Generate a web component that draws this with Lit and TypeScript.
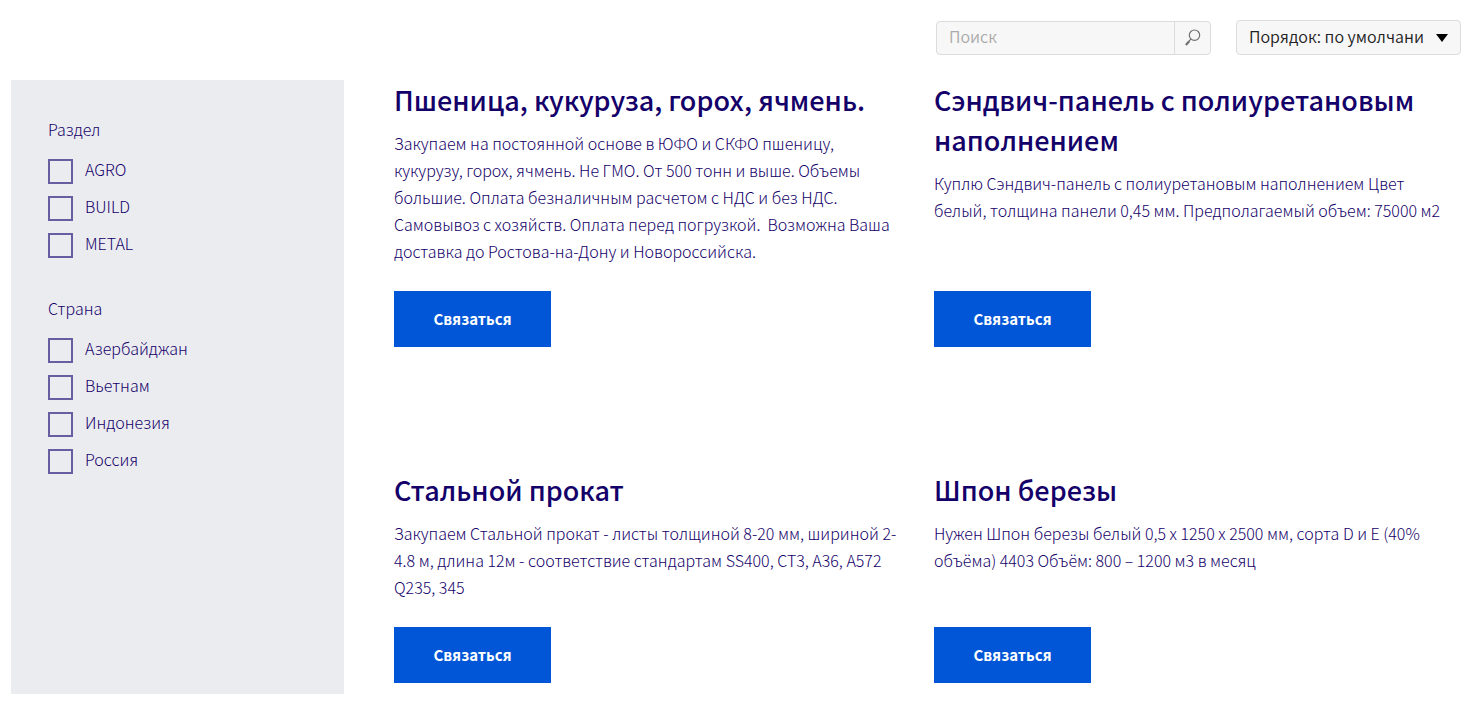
import { LitElement, html, css } from "lit";
import { customElement } from "lit/decorators.js";

interface Offer {
  title: string;
  text: string;
}

interface FilterGroup {
  name: string;
  key: string;
  options: string[];
}

const FILTERS: FilterGroup[] = [
  { name: "Раздел", key: "section", options: ["AGRO", "BUILD", "METAL"] },
  { name: "Страна", key: "country", options: ["Азербайджан", "Вьетнам", "Индонезия", "Россия"] },
];

const OFFERS: Offer[] = [
  {
    title: "Пшеница, кукуруза, горох, ячмень.",
    text: "Закупаем на постоянной основе в ЮФО и СКФО пшеницу, кукурузу, горох, ячмень. Не ГМО. От 500 тонн и выше. Объемы большие. Оплата безналичным расчетом с НДС и без НДС. Самовывоз с хозяйств. Оплата перед погрузкой.\u00a0 Возможна Ваша доставка до Ростова-на-Дону и Новороссийска.",
  },
  {
    title: "Сэндвич-панель с полиуретановым наполнением",
    text: "Куплю Сэндвич-панель с полиуретановым наполнением Цвет белый, толщина панели 0,45 мм. Предполагаемый объем: 75000 м2",
  },
  {
    title: "Стальной прокат",
    text: "Закупаем Стальной прокат - листы толщиной 8-20 мм, шириной 2-4.8 м, длина 12м - соответствие стандартам SS400, СТ3, А36, А572 Q235, 345",
  },
  {
    title: "Шпон березы",
    text: "Нужен Шпон березы белый 0,5 x 1250 x 2500 мм, сорта D и E (40% объёма) 4403 Объём: 800 – 1200 м3 в месяц",
  },
];

@customElement("app-root")
export class AppRoot extends LitElement {
  static styles = css`
    :host {
      display: block;
      box-sizing: border-box;
      padding: 20px 8px 12px 11px;
      background: #fff;
      color: #140069;
      font: 300 16px/27px "Noto Sans CJK SC", "Noto Sans", sans-serif;
    }
    *, *::before { box-sizing: border-box; }
    input, select, button { font: inherit; margin: 0; }
    .toolbar {
      display: flex;
      justify-content: flex-end;
      align-items: flex-end;
      gap: 25px;
      height: 35px;
      margin-bottom: 25px;
      font-weight: 350;
    }
    .search {
      display: flex;
      width: 275px;
      height: 34px;
      border: 1px solid #dcdcdc;
      border-radius: 4px;
      background: #f7f7f7;
      overflow: hidden;
    }
    .query {
      flex: 1;
      min-width: 0;
      padding: 0 12px 4px;
      border: 0;
      background: none;
      color: #222;
      outline-offset: -2px;
    }
    .query::placeholder { color: #aaa; opacity: 1; }
    .find {
      display: grid;
      place-items: center;
      width: 36px;
      padding: 0;
      border: 0;
      border-left: 1px solid #dcdcdc;
      background: none;
      cursor: pointer;
    }
    .sort { display: grid; align-items: center; width: 225px; }
    .sort > * { grid-area: 1 / 1; }
    .order {
      appearance: none;
      width: 100%;
      height: 35px;
      padding: 0 32px 2px 12px;
      border: 1px solid #dcdcdc;
      border-radius: 4px;
      background: #f7f7f7;
      color: #222;
    }
    .arrow { justify-self: end; margin-right: 13px; pointer-events: none; }
    .layout {
      display: grid;
      grid-template-columns: 333px 1fr;
      gap: 50px;
    }
    .filters {
      display: flex;
      flex-direction: column;
      gap: 37px;
      padding: 36px 37px;
      background: #ebecf0;
    }
    .group { margin: 0; padding: 0; border: 0; min-width: 0; }
    .legend { padding: 0; margin-bottom: 16px; }
    .options { display: flex; flex-direction: column; gap: 12px; }
    .option {
      display: flex;
      align-items: flex-start;
      gap: 12px;
      line-height: 20px;
      cursor: pointer;
    }
    .box {
      appearance: none;
      flex: none;
      width: 25px;
      height: 25px;
      border: 2px solid #675da0;
    }
    .box:checked { background: #675da0; }
    .offers {
      display: grid;
      grid-template-columns: 1fr 1fr;
      gap: 123px 25px;
      align-content: start;
      padding: 0 12px 11px 0;
    }
    .card { display: flex; flex-direction: column; align-items: flex-start; }
    .title { margin: 0 0 10px; font-size: 27px; font-weight: 500; line-height: 40px; }
    .text { margin: 0 0 26px; padding-right: 6px; }
    .contact {
      margin-top: auto;
      width: 157px;
      height: 56px;
      padding: 0 0 1px;
      border: 0;
      background: #0056d6;
      color: #fff;
      font-size: 15px;
      font-weight: 700;
      cursor: pointer;
    }
  `;

  render() {
    return html`
      <form class="toolbar" @submit=${(e: Event) => e.preventDefault()}>
        <div class="search">
          <input class="query" type="search" placeholder="Поиск" aria-label="Поиск" />
          <button class="find" aria-label="Найти">
            <svg width="18" height="18" viewBox="0 0 18 18" fill="none" stroke="#707070">
              <circle cx="10.5" cy="6.2" r="5.2" stroke-width="1.2" />
              <path d="M6.8 10 4.8 12.6" stroke-width="1.2" />
              <path d="M5.2 12.2 1.9 15.9" stroke-width="2.2" />
            </svg>
          </button>
        </div>
        <div class="sort">
          <select class="order" aria-label="Порядок">
            <option>Порядок: по умолчани</option>
          </select>
          <svg class="arrow" width="12" height="8" viewBox="0 0 12 8"><path d="M0 0h12L6 8z" /></svg>
        </div>
      </form>
      <div class="layout">
        <aside class="filters">
          ${FILTERS.map(
            (group) => html`
              <fieldset class="group">
                <legend class="legend">${group.name}</legend>
                <div class="options">
                  ${group.options.map(
                    (option) => html`
                      <label class="option">
                        <input class="box" type="checkbox" name=${group.key} value=${option} />
                        <span>${option}</span>
                      </label>
                    `
                  )}
                </div>
              </fieldset>
            `
          )}
        </aside>
        <main class="offers">
          ${OFFERS.map(
            (offer) => html`
              <article class="card">
                <h2 class="title">${offer.title}</h2>
                <p class="text">${offer.text}</p>
                <button class="contact" type="button">Связаться</button>
              </article>
            `
          )}
        </main>
      </div>
    `;
  }
}
